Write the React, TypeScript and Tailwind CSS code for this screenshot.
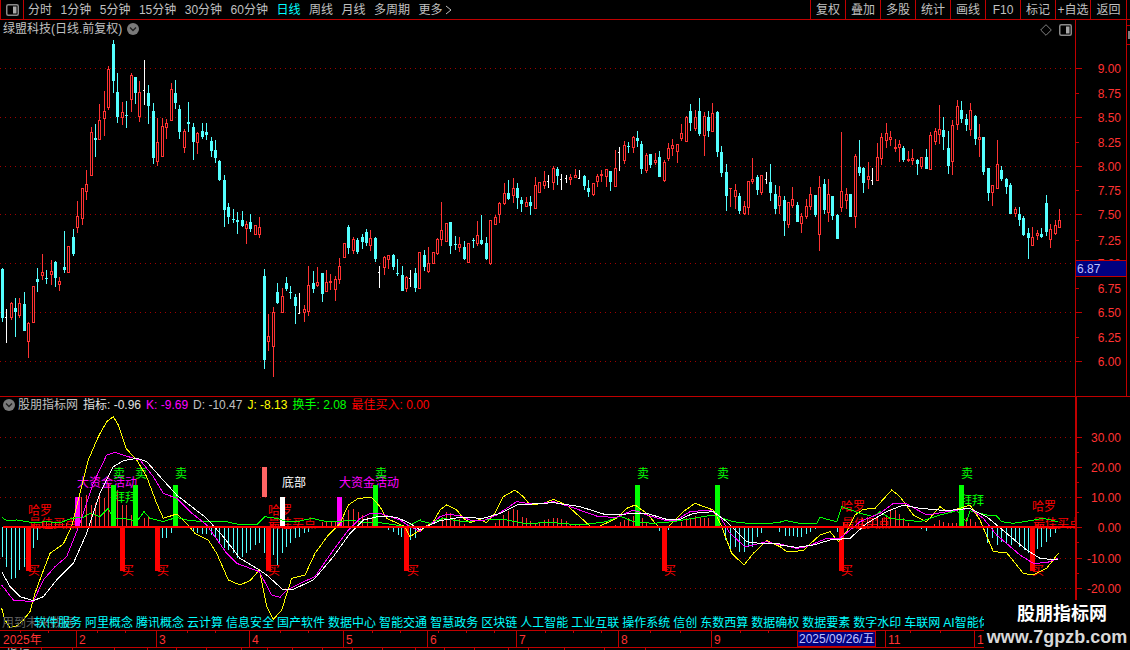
import React from "react";

type C = [number, string, number, number, number, number];
const UP = "#ff3232";
const CY = "#54ffff";

const chunkA: C[] = [[7,"c",715,718,863,875],[19,"w",838,860,862,938],[34,"r",815,820,863,870],[46,"c",805,835,845,920],[58,"r",805,820,857,865],[73,"c",787,822,902,902],[85,"r",875,880,935,983],[100,"r",768,768,878,878],[112,"c",715,747,755,785],[127,"r",672,726,737,750],[139,"c",720,744,746,762],[154,"r",690,724,735,765],[166,"c",693,696,743,770],[178,"r",740,754,764,782],[193,"c",603,712,720,728],[205,"r",648,648,728,728],[220,"c",598,622,672,678],[232,"r",514,559,593,608],[247,"r",475,475,566,585],[259,"r",420,463,487,510],[274,"r",292,307,437,437],[286,"c",282,324,329,381],[298,"r",222,271,329,329],[313,"r",183,244,268,318],[325,"r",108,117,233,240],[340,"c",30,42,152,188],[352,"c",130,187,260,278],[367,"r",216,247,263,285],[379,"c",213,255,258,293],[394,"r",130,136,209,246],[406,"c",141,141,189,222],[418,"r",153,187,261,276],[433,"w",90,180,183,225],[445,"c",165,190,227,282],[460,"c",220,244,384,402],[472,"r",264,337,395,409],[487,"r",265,287,380,380],[499,"r",268,280,293,327],[514,"r",160,178,272,272],[526,"c",150,190,218,237],[538,"c",225,238,305,327],[553,"r",298,304,353,369],[565,"c",217,277,282,306],[580,"c",280,292,335,390],[592,"r",305,310,338,372],[607,"c",280,304,321,327],[619,"c",280,307,315,330],[634,"c",320,334,362,380],[646,"c",331,360,384,400],[658,"c",390,393,450,452],[673,"c",436,451,539,590],[685,"c",520,532,560,582],[700,"c",538,567,570,580],[712,"c",546,571,575,611],[727,"c",544,571,587,590],[739,"r",572,583,596,641],[751,"c",552,576,597,605],[766,"r",586,586,614,614],[778,"r",561,592,614,623],[793,"c",718,739,990,1017],[805,"r",852,919,935,962],[820,"r",832,847,952,1040],[832,"c",760,786,819,822]];
const chunkB: C[] = [[52,"c",580,606,639,642],[67,"r",595,619,668,668],[79,"c",561,580,597,603],[91,"c",588,606,608,627],[106,"c",612,622,648,702],[118,"w",610,668,671,672],[133,"r",645,658,668,696],[145,"r",528,586,665,678],[160,"c",544,580,597,609],[172,"r",531,577,587,591],[187,"c",549,549,612,636],[199,"r",541,577,605,606],[211,"r",552,574,578,600],[226,"r",559,568,599,633],[238,"r",504,529,569,582],[253,"r",460,460,503,503],[265,"c",405,411,474,492],[280,"r",441,447,483,492],[292,"c",444,450,486,492],[307,"c",432,442,456,477],[319,"c",417,426,459,468],[331,"r",420,445,468,483],[346,"c",441,444,507,516],[358,"w",528,546,549,594],[373,"r",498,501,533,555],[385,"r",495,496,510,537],[400,"c",492,495,531,540],[412,"c",507,549,552,558],[427,"c",528,555,603,603],[439,"r",558,561,597,606],[451,"w",540,564,567,591],[466,"c",534,549,594,606],[478,"r",486,486,597,597],[493,"c",480,495,531,543],[505,"r",471,520,546,549],[520,"r",486,486,522,522],[532,"r",444,447,492,495],[544,"r",336,420,450,468],[559,"r",399,399,456,456],[571,"c",396,396,468,492],[586,"c",438,462,465,480],[598,"r",441,462,474,486],[613,"c",453,471,507,510],[625,"r",459,459,519,519],[640,"c",444,450,453,474],[652,"r",393,435,462,468],[664,"c",375,450,463,465],[679,"c",441,459,508,510],[691,"r",390,390,522,524],[706,"r",375,381,405,405],[718,"r",336,339,375,399],[733,"r",279,309,342,345],[745,"c",270,309,327,330],[760,"r",264,294,318,339],[772,"c",279,294,324,357],[784,"c",321,330,342,366],[799,"r",321,336,351,351],[811,"c",318,336,348,375],[826,"r",261,285,357,357],[838,"r",276,276,309,309],[853,"r",243,274,288,297],[865,"w",255,273,276,294],[880,"r",228,234,279,300],[892,"c",231,237,258,285]];
const chunkC: C[] = [[4,"w",252,266,268,300],[19,"w",255,264,266,279],[31,"r",252,261,270,285],[46,"r",237,255,264,264],[58,"w",240,264,265,267],[73,"c",255,258,288,300],[85,"c",270,294,306,321],[100,"r",279,280,315,318],[112,"r",252,259,276,291],[124,"r",240,252,257,276],[139,"r",237,238,261,291],[151,"c",243,243,276,303],[166,"r",180,235,291,291],[178,"w",171,186,188,243],[193,"r",153,165,213,222],[205,"c",156,168,171,189],[220,"r",138,141,174,189],[232,"c",123,144,153,171],[244,"c",153,162,237,252],[259,"r",189,195,243,249],[271,"c",192,192,225,234],[286,"r",189,210,219,225],[298,"c",183,201,261,261],[313,"r",210,216,273,276],[325,"r",159,174,207,213],[337,"r",147,165,177,198],[352,"r",162,162,186,219],[364,"r",102,129,147,153],[379,"r",78,81,156,156],[391,"c",42,63,99,123],[406,"r",60,81,117,123],[418,"c",24,63,132,138],[433,"r",66,78,139,198],[445,"c",63,81,123,141],[457,"r",39,69,125,126],[472,"c",63,66,186,201],[484,"c",168,186,249,261],[499,"c",222,246,318,363],[511,"r",295,295,298,351],[526,"r",282,300,321,357],[538,"c",309,318,363,372],[553,"r",333,348,372,375],[565,"r",273,273,354,375],[577,"r",204,267,276,282],[592,"c",255,261,300,315],[604,"r",255,255,309,315],[619,"w",246,266,268,282],[631,"c",222,276,309,333],[646,"c",285,312,357,372],[658,"r",288,318,348,372],[673,"c",318,330,393,438],[685,"r",336,336,405,414],[697,"r",291,327,348,354],[712,"c",336,345,396,396],[724,"r",369,378,402,429],[739,"r",327,348,381,387],[751,"r",291,312,351,360],[766,"c",315,315,375,381],[778,"r",258,291,435,483],[793,"c",267,282,360,372],[805,"r",267,312,369,396],[817,"c",318,318,378,390],[832,"c",372,375,447,447],[844,"r",126,303,354,366],[859,"r",294,312,333,357],[871,"c",312,312,381,381],[886,"r",192,198,381,414]];
const chunkD: C[] = [[58,"c",150,231,249,258],[70,"c",231,234,279,309],[85,"r",216,258,270,297],[97,"w",234,270,272,285],[112,"r",159,201,273,273],[124,"r",129,141,207,225],[139,"r",99,129,153,174],[151,"r",123,141,150,168],[166,"r",147,171,176,186],[178,"r",150,162,174,216],[190,"c",168,174,210,216],[205,"r",183,207,213,216],[217,"r",177,204,213,225],[232,"c",207,210,222,255],[244,"r",201,201,231,237],[259,"c",177,201,237,237],[271,"r",126,135,240,240],[286,"r",114,123,156,165],[298,"r",45,117,135,162],[310,"c",81,120,141,180],[325,"c",123,174,228,252],[337,"r",90,105,216,255],[352,"r",30,48,105,120],[364,"c",33,60,87,99],[379,"c",72,87,105,123],[391,"r",39,60,120,138],[406,"c",75,78,147,165],[418,"r",102,141,150,201],[430,"c",141,141,246,255],[445,"c",234,234,309,333],[457,"r",285,285,309,348],[472,"r",150,222,297,297],[484,"c",228,240,267,273],[499,"c",264,267,291,312],[511,"c",279,285,372,372],[526,"r",351,357,372,381],[538,"c",351,372,390,408],[550,"c",378,384,435,438],[565,"c",414,429,444,507],[577,"r",411,441,468,468],[592,"r",420,429,438,450],[604,"c",414,432,441,444],[619,"c",315,339,426,438],[631,"r",402,417,450,474],[646,"r",390,405,432,435],[658,"r",357,390,414,414]];

const px = (xc: number, off: number) => Math.round((xc - 1.5) / 3) + off;
const py = (yc: number, off: number) => Math.round(yc / 3) + off;

function Candles({ data, ox, oy }: { data: C[]; ox: number; oy: number }) {
  return (
    <>
      {data.map(([xc, k, hi, top, bot, lo]) => {
        const x = px(xc, ox);
        const h = py(hi, oy), t = py(top, oy), b = py(bot, oy), l = py(lo, oy);
        if (k === "w") {
          return (
            <g key={xc} fill="#ffffff">
              <rect x={x} y={h} width={1} height={Math.max(l - h, 1)} />
              <rect x={x - 1} y={t} width={1} height={1} />
            </g>
          );
        }
        const col = k === "r" ? UP : CY;
        const bh = Math.max(b - t, 1);
        return (
          <g key={xc} fill={col}>
            <rect x={x} y={h} width={1} height={Math.max(l - h, 1)} />
            <rect x={x - 1} y={t} width={3} height={bh} />
            {k === "r" && bh > 2 && <rect x={x} y={t + 1} width={1} height={bh - 2} fill="#000000" />}
          </g>
        );
      })}
    </>
  );
}

const seg = (a: number[][], off: number) => a.map(([x, y]) => `${x / 3 + off},${y / 3 + 390}`).join(" ");
const yellow = [
  seg([[5,655],[15,690],[30,712],[50,708],[70,690],[90,665],[105,610],[125,555],[150,490],[190,462],[215,410],[240,310],[265,210],[295,140],[320,95],[340,80],[355,105],[378,175],[410,210],[440,260],[470,340],[490,385],[530,372],[560,400],[585,430],[625,450],[650,490],[685,570],[720,585],[750,572],[778,540],[800,650],[820,688],[845,660],[875,565],[915,555],[945,490],[985,435],[1020,400],[1045,345],[1075,325],[1115,322],[1140,350],[1160,385],[1215,410],[1230,440],[1260,420]],0),
  seg([[0,425],[15,410],[40,395],[60,360],[80,345],[110,360],[130,385],[150,398],[180,388],[200,398],[225,370],[250,320],[285,300],[310,320],[330,345],[370,340],[400,328],[440,345],[490,390],[510,408],[540,408],[590,385],[620,355],[645,345],[680,370],[715,410],[745,410],[790,365],[825,340],[880,360],[905,410],[935,490],[972,525],[1000,490],[1040,452],[1080,470]],420),
  seg([[0,470],[20,485],[70,482],[90,462],[120,435],[150,425],[175,455],[200,425],[225,375],[250,358],[285,355],[335,300],[360,320],[400,375],[440,395],[480,350],[500,365],[540,355],[570,345],[600,390],[640,485],[680,488],[730,550],[760,555],[800,535],[835,490]],780),
].join(" ");
const magenta = [
  seg([[5,585],[40,630],[100,635],[130,570],[165,530],[200,500],[240,400],[280,280],[320,195],[345,187],[385,200],[420,210],[460,260],[490,310],[530,325],[570,365],[620,405],[680,490],[710,520],[778,545],[815,615],[840,622],[860,600],[900,580],[945,560],[1000,480],[1045,420],[1080,385],[1110,370],[1145,372],[1200,390],[1230,410],[1260,425]],0),
  seg([[0,415],[30,405],[60,380],[85,372],[120,378],[150,390],[195,390],[230,375],[290,335],[320,340],[350,342],[400,335],[450,350],[535,380],[590,382],[640,360],[680,375],[740,392],[770,390],[810,365],[870,360],[900,380],[930,430],[975,470],[1000,465],[1040,455],[1080,465]],420),
  seg([[0,462],[50,475],[80,470],[140,445],[180,445],[240,395],[300,370],[340,340],[380,342],[440,375],[500,365],[570,355],[610,385],[650,435],[720,495],[760,520],[800,518],[835,505]],780),
].join(" ");
const white = [
  seg([[5,545],[30,590],[60,620],[100,632],[130,620],[170,570],[220,520],[260,430],[300,310],[340,230],[370,212],[410,205],[440,215],[480,260],[530,315],[620,385],[670,440],[720,505],[770,535],[800,555],[850,600],[880,598],[940,570],[1000,500],[1050,430],[1090,390],[1140,378],[1190,382],[1230,400],[1260,420]],0),
  seg([[0,420],[30,405],[60,392],[120,382],[190,385],[240,370],[290,345],[400,338],[480,350],[560,375],[620,372],[680,370],[740,388],[780,388],[820,370],[880,365],[920,395],[980,455],[1020,460],[1080,462]],420),
  seg([[0,465],[50,472],[100,465],[150,450],[210,445],[260,400],[320,365],[370,345],[420,355],[500,362],[570,355],[620,380],[680,430],[740,480],[780,505],[835,510]],780),
].join(" ");
const green = [
  seg([[5,382],[20,392],[50,390],[100,398],[140,395],[180,398],[215,385],[250,382],[270,370],[300,380],[325,355],[340,385],[375,385],[410,395],[432,365],[450,385],[490,395],[530,382],[570,392],[620,395],[680,395],[710,402],[770,404],[795,380],[830,385],[860,395],[900,393],[935,385],[980,395],[1020,395],[1050,390],[1090,397],[1140,398],[1220,410],[1260,390]],0),
  seg([[0,392],[30,400],[70,385],[130,395],[195,390],[250,388],[310,400],[400,398],[480,405],[560,395],[600,378],[640,395],[700,400],[760,395],[850,380],[880,375],[940,395],[1000,402],[1080,398]],420),
  seg([[0,395],[20,392],[60,400],[110,400],[120,382],[170,395],[185,350],[240,370],[280,380],[300,365],[330,385],[420,395],[480,375],[530,362],[560,395],[570,362],[620,375],[650,378],[665,395],[700,400],[750,392],[790,385],[835,395]],780),
].join(" ");

const hist: [number, number[][]][] = [
  [0, [[7,500],[19,530],[34,568],[46,565],[58,540],[73,530],[100,475],[112,450],[127,395],[139,395],[154,400],[166,398],[187,398],[199,398],[245,320],[259,315],[274,345],[286,340],[298,310],[313,325],[325,280],[352,300],[367,345],[379,345],[394,375],[433,385],[445,380],[487,445],[499,445],[514,428],[580,425],[592,430],[607,432],[619,432],[634,435],[646,440],[658,455],[673,475],[685,480],[700,490],[712,505],[727,500],[739,490],[751,480],[766,465],[778,460],[793,490],[820,495],[832,525],[847,490],[859,470],[871,460],[886,445],[898,440],[913,430],[925,425],[967,395],[979,395],[994,395],[1006,395],[1030,385],[1045,360],[1060,358],[1075,365],[1087,375],[1102,380],[1117,385],[1165,420],[1180,425],[1195,435],[1205,440],[1230,450],[1245,445]]],
  [420, [[66,380],[79,365],[91,370],[103,385],[118,387],[133,402],[225,400],[237,390],[250,375],[265,362],[279,358],[292,360],[307,380],[319,385],[331,392],[346,400],[358,400],[373,390],[385,388],[400,385],[412,385],[424,388],[439,393],[451,403],[466,405],[478,405],[520,415],[532,415],[587,405],[600,395],[612,390],[625,385],[640,378],[667,385],[679,395],[717,422],[745,420],[785,395],[800,385],[812,385],[827,378],[840,385],[853,385],[865,385],[917,450],[932,480],[945,470],[958,485],[973,487],[985,470],[998,470],[1011,440],[1025,430],[1065,415],[1078,425]]],
  [780, [[15,437],[27,437],[40,437],[52,440],[64,440],[79,432],[91,425],[106,418],[172,425],[190,395],[235,395],[247,385],[262,380],[277,385],[292,385],[307,385],[319,378],[331,358],[346,360],[358,372],[370,385],[385,400],[412,415],[424,418],[439,422],[464,402],[479,390],[491,395],[506,400],[518,400],[530,398],[558,385],[570,388],[585,395],[622,460],[637,445],[652,465],[665,455],[679,460],[694,465],[706,455],[718,470],[733,480],[745,490],[772,477],[784,470],[799,455],[811,442],[826,430]]],
];

const BARS: [number, number, number, string][] = [
  [26,527,571,"#ff0000"],[120,527,571,"#ff0000"],[155,527,571,"#ff0000"],[266,527,571,"#ff0000"],[404,527,571,"#ff0000"],[662,527,571,"#ff0000"],[839,527,571,"#ff0000"],[1030,527,571,"#ff0000"],
  [75,497,526,"#ff00ff"],[337,497,526,"#ff00ff"],
  [111,485,526,"#00ff00"],[133,485,526,"#00ff00"],[173,485,526,"#00ff00"],[373,485,526,"#00ff00"],[635,485,526,"#00ff00"],[715,485,526,"#00ff00"],[959,485,526,"#00ff00"],
  [262,467,497,"#ff6464"],[280,497,526,"#ffffff"],
];

const NOTES: [string, number, number, string][] = [
  ["哈罗",28,515,"#ff0000"],["最佳买点",29,528,"#ff0000"],["哈罗",268,515,"#ff0000"],["最佳买点",268,528,"#ff0000"],
  ["哈罗",841,511,"#ff0000"],["最佳买点",842,528,"#ff0000"],["哈罗",1032,511,"#ff0000"],["最佳买点",1033,528,"#ff0000"],
  ["大资金活动",77,487,"#ff00ff"],["大资金活动",339,487,"#ff00ff"],["底部",282,487,"#ffffff"],
  ["卖",113,478,"#00ff00"],["卖",135,478,"#00ff00"],["卖",175,478,"#00ff00"],["卖",375,478,"#00ff00"],["卖",637,478,"#00ff00"],["卖",717,478,"#00ff00"],["卖",961,478,"#00ff00"],
  ["拜拜",113,502,"#00ff00"],["拜拜",960,505,"#00ff00"],
  ["买",28,575,"#ff0000"],["买",122,575,"#ff0000"],["买",157,575,"#ff0000"],["买",268,575,"#ff0000"],["买",407,575,"#ff0000"],["买",664,575,"#ff0000"],["买",841,575,"#ff0000"],["买",1032,575,"#ff0000"],
];

const TABS = ["分时","1分钟","5分钟","15分钟","30分钟","60分钟","日线","周线","月线","多周期"];
const TOOLS = ["复权","叠加","多股","统计","画线","F10","标记","+自选"];
const SECTORS = ["软件服务","阿里概念","腾讯概念","云计算","信息安全","国产软件","数据中心","智能交通","智慧政务","区块链","人工智能","工业互联","操作系统","信创","东数西算","数据确权","数据要素","数字水印","车联网","AI智能体"];
const PRICE_MAJOR: [string, number][] = [["9.00",68],["8.50",117],["8.00",166],["7.50",214],["7.00",263],["6.50",312],["6.00",361]];
const PRICE_MINOR: [string, number][] = [["8.75",93],["8.25",142],["7.75",190],["7.25",240],["6.75",288],["6.25",337]];
const IND: [string, number][] = [["30.00",437],["20.00",467],["10.00",497],["0.00",527],["-10.00",558],["-20.00",588]];
const BOTTOM = [42,31,42,33,29,30,35,26,25,30,30,30,33,29,30,34,20,36,40,41];
const AXIS_TICKS = [20,48,97,125,187,215,280,308,372,400,438,466,494,545,573,601,650,680,740,768,910,940];

function Chevron() {
  return (
    <svg width="12" height="12" viewBox="0 0 12 12" className="shrink-0">
      <circle cx="6" cy="6" r="6" fill="#7a7a7a" />
      <path d="M3 4.5 L6 7.5 L9 4.5" fill="none" stroke="#202020" strokeWidth="1.4" />
    </svg>
  );
}

function PanelIcon() {
  return (
    <svg width="13" height="12" viewBox="0 0 13 12">
      <rect x="0.75" y="0.75" width="11.5" height="10.5" rx="1.5" fill="none" stroke="#8a8a8a" strokeWidth="1.5" />
      <rect x="7" y="2.5" width="3.5" height="7" fill="#a8a8a8" />
    </svg>
  );
}

export default function App() {
  return (
    <div className="relative w-[1130px] h-[650px] overflow-hidden bg-black text-[12px] leading-none text-[#c0c0c0] [font-family:'Liberation_Sans','Noto_Sans_CJK_SC',sans-serif]">
      {/* Top bar */}
      <div className="flex h-5 items-stretch border-b border-[#c00000]">
        <div className="flex w-6 shrink-0 items-center justify-center border-x border-[#c00000]">
          <PanelIcon />
        </div>
        <div className="flex items-center gap-[8.5px] pl-1">
          {TABS.map((t) => (
            <span key={t} className={t === "日线" ? "text-[#00ffff]" : ""}>{t}</span>
          ))}
          <span className="flex items-center gap-[2px]">
            更多
            <svg width="7" height="10" viewBox="0 0 7 10"><path d="M1 1 L6 5 L1 9" fill="none" stroke="#c0c0c0" /></svg>
          </span>
        </div>
        <div className="ml-auto flex items-stretch">
          {TOOLS.map((t) => (
            <div key={t} className="flex w-[35px] items-center justify-center border-l border-[#c00000]">{t}</div>
          ))}
          <div className="flex w-9 items-center justify-center border-l border-[#c00000]">返回</div>
          <div className="w-1 border-l border-[#c00000]" />
        </div>
      </div>

      {/* Price panel */}
      <div className="flex h-[376px]">
        <div className="relative h-full w-[1075px] shrink-0">
          <svg width="1075" height="376" viewBox="0 20 1075 376" shapeRendering="crispEdges" className="block">
            {PRICE_MAJOR.map(([l, y]) => (
              <line key={l} x1="0" x2="1075" y1={y + 0.5} y2={y + 0.5} stroke="#a00000" strokeDasharray="1 4" />
            ))}
            <Candles data={chunkA} ox={0} oy={30} />
            <Candles data={chunkB} ox={260} oy={90} />
            <Candles data={chunkC} ox={560} oy={90} />
            <Candles data={chunkD} ox={840} oy={90} />
          </svg>
          <div className="absolute left-[3px] top-[3px] flex items-center gap-[5px]">
            <span>绿盟科技(日线.前复权)</span>
            <Chevron />
          </div>
          <div className="absolute right-[3px] top-[4px] flex items-center gap-[7px]">
            <svg width="12" height="12" viewBox="0 0 12 12"><path d="M6 0.7 L11.3 6 L6 11.3 L0.7 6 Z" fill="none" stroke="#808080" /></svg>
            <PanelIcon />
          </div>
        </div>
        <div className="relative h-full w-[52px] shrink-0 border-x border-[#c00000]">
          <svg width="50" height="376" viewBox="1076 20 50 376" className="block">
            {PRICE_MAJOR.map(([l, y]) => (
              <g key={l}>
                <rect x="1076" y={y} width="6" height="1" fill="#c00000" />
                <text x="1121" y={y + 5} textAnchor="end" fontSize="12" fill={UP}>{l}</text>
              </g>
            ))}
            {PRICE_MINOR.map(([l, y]) => (
              <g key={l}>
                <rect x="1076" y={y} width="3" height="1" fill="#c00000" />
                <text x="1121" y={y + 5} textAnchor="end" fontSize="12" fill={UP}>{l}</text>
              </g>
            ))}
          </svg>
          <div className="absolute left-0 right-0 top-[240px] flex h-[17px] items-center border-y border-[#c00000] bg-[#000080] pl-[1px] text-[#c0c0ff]">6.87</div>
        </div>
        <div className="relative flex-1">
          <div className="mt-[5px] flex h-[20px] items-center border-y border-[#c00000]">
            <div className="ml-[1px] h-[8px] w-[2px] bg-[#808080]" />
          </div>
        </div>
      </div>

      {/* Indicator panel */}
      <div className="flex h-[234px] border-t border-[#c00000]">
        <div className="relative h-full w-[1075px] shrink-0 overflow-hidden">
          <svg width="1075" height="233" viewBox="0 397 1075 233" shapeRendering="crispEdges" className="block">
            {IND.filter(([l]) => l !== "0.00").map(([l, y]) => (
              <line key={l} x1="0" x2="1075" y1={y + 0.5} y2={y + 0.5} stroke="#a00000" strokeDasharray="1 4" />
            ))}
            {hist.flatMap(([off, list]) =>
              list.map(([xc, tip]) => {
                const x = px(xc, off);
                const t = py(tip, 390);
                return t < 527
                  ? <rect key={`${off}-${xc}`} x={x} y={t} width="1" height={527 - t} fill={UP} />
                  : <rect key={`${off}-${xc}`} x={x} y="527" width="1" height={t - 527} fill={CY} />;
              })
            )}
            {NOTES.map(([s, x, y, c], i) => (
              <text key={i} x={x} y={y} fontSize="12" fill={c}>{s}</text>
            ))}
            {BARS.map(([x, t, b, c], i) => (
              <rect key={i} x={x} y={t} width="5" height={b - t} fill={c} />
            ))}
            <polyline points={yellow} fill="none" stroke="#ffff00" />
            <polyline points={green} fill="none" stroke="#00ff00" />
            <polyline points={magenta} fill="none" stroke="#ff00ff" />
            <polyline points={white} fill="none" stroke="#ffffff" />
            <rect x="3" y="526" width="1072" height="2" fill="#ff0000" />
          </svg>
          <div className="absolute left-[3px] top-[2px] flex items-center gap-[5px] whitespace-nowrap">
            <Chevron />
            <span className="-ml-[2px]">股朋指标网</span>
            <span className="text-[#e0e0e0]">指标: -0.96</span>
            <span className="text-[#ff00ff]">K: -9.69</span>
            <span>D: -10.47</span>
            <span className="text-[#ffff00]">J: -8.13</span>
            <span className="text-[#00ff00]">换手: 2.08</span>
            <span className="text-[#ff0000]">最佳买入: 0.00</span>
          </div>
          <span className="absolute bottom-[1px] left-[2px] text-[#606060]">用到未来数据</span>
          <div className="absolute bottom-[1px] left-0 flex h-[13px] w-[984px] items-center gap-[3px] overflow-hidden whitespace-nowrap pl-[34px] text-[#00ffff]">
            {SECTORS.map((s) => <span key={s} className="shrink-0">{s}</span>)}
          </div>
        </div>
        <div className="relative h-full flex-1 border-l-2 border-[#c00000]">
          <svg width="53" height="233" viewBox="1077 397 53 233" className="block">
            {IND.map(([l, y]) => (
              <g key={l}>
                <rect x="1077" y={y} width="5" height="1" fill="#c00000" />
                <text x="1121" y={y + 5} textAnchor="end" fontSize="12" fill={UP}>{l}</text>
              </g>
            ))}
            {[452, 482, 512, 542, 573].map((y) => (
              <rect key={y} x="1077" y={y} width="2" height="1" fill="#c00000" />
            ))}
          </svg>
        </div>
      </div>

      {/* Time axis */}
      <div className="relative flex h-[17px] items-stretch border-t border-[#c00000] text-[#ff3232]">
        <svg width="984" height="3" viewBox="0 0 984 3" className="absolute left-0 top-0">
          {AXIS_TICKS.map((x) => <rect key={x} x={x} y="0" width="1" height="2" fill="#c00000" />)}
        </svg>
        <div className="w-[76px] pl-[3px] pt-[3px]">2025年</div>
        <div className="w-[80px] border-l border-[#c00000] pl-[2px] pt-[3px]">2</div>
        <div className="w-[93px] border-l border-[#c00000] pl-[2px] pt-[3px]">3</div>
        <div className="w-[94px] border-l border-[#c00000] pl-[2px] pt-[3px]">4</div>
        <div className="w-[84px] border-l border-[#c00000] pl-[2px] pt-[3px]">5</div>
        <div className="w-[89px] border-l border-[#c00000] pl-[2px] pt-[3px]">6</div>
        <div className="w-[102px] border-l border-[#c00000] pl-[2px] pt-[3px]">7</div>
        <div className="w-[93px] border-l border-[#c00000] pl-[2px] pt-[3px]">8</div>
        <div className="w-[86px] border-l border-[#c00000] pl-[2px] pt-[3px]">9</div>
        <div className="relative flex w-[79px] items-center border border-[#c00000] bg-[#000080] pl-[1px] text-[#c0c0ff]">2025/09/26/五</div>
        <div className="w-[9px]" />
        <div className="w-[89px] border-l border-[#c00000] pl-[2px] pt-[3px]">11</div>
        <div className="flex-1 border-l border-[#c00000] pl-[2px] pt-[3px]">1</div>
      </div>

      {/* Clipped status row */}
      <div className="flex h-[3px] overflow-hidden border-t border-[#c00000] text-[#c0c0c0]">
        {BOTTOM.map((w, i) => (
          <div key={i} style={{ width: w }} className="shrink-0 border-r border-[#c00000] pl-[6px] pt-[1px]">
            {i === 0 ? "指标" : ""}
          </div>
        ))}
      </div>

      {/* Watermark */}
      <div className="absolute bottom-0 right-0 flex h-[50px] w-[146px] flex-col items-center bg-black pt-[3px]">
        <span className="ml-[10px] text-[18px] font-bold leading-[22px] text-white">股朋指标网</span>
        <span className="mt-[1px] text-[18px] font-bold leading-[22px] text-[#d8d8d8]">www.7gpzb.com</span>
      </div>
    </div>
  );
}
